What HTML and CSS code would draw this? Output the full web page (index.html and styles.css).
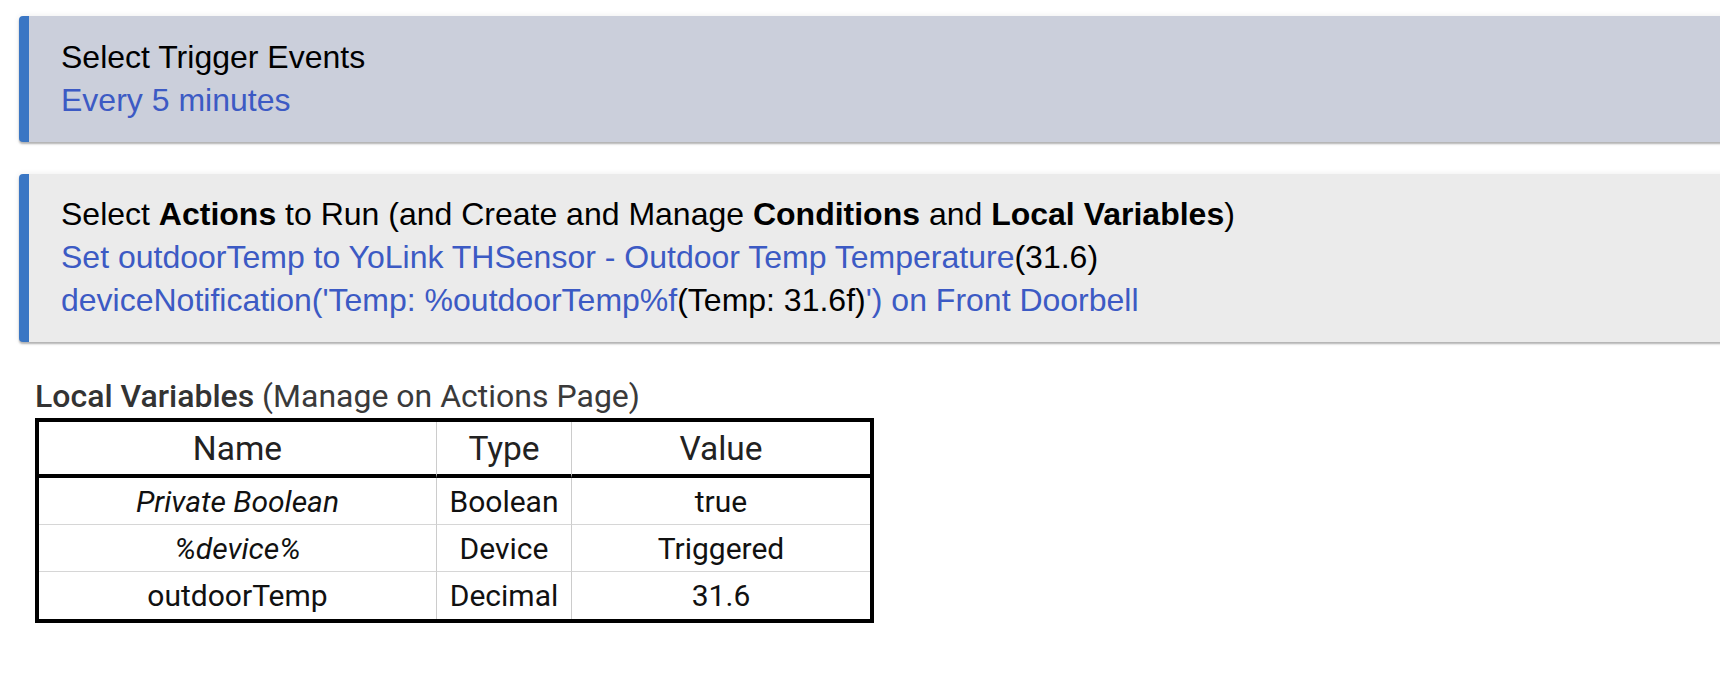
FILE: index.html
```html
<!DOCTYPE html>
<html>
<head>
<meta charset="utf-8">
<link rel="stylesheet" href="styles.css">
</head>
<body>
<div class="page">
  <div class="card card-trigger">
    <div class="line">Select Trigger Events</div>
    <div class="line link">Every 5 minutes</div>
  </div>
  <div class="card card-actions">
    <div class="line">Select <b>Actions</b> to Run (and Create and Manage <b>Conditions</b> and <b>Local Variables</b>)</div>
    <div class="line"><span class="link">Set outdoorTemp to YoLink THSensor - Outdoor Temp Temperature</span>(31.6)</div>
    <div class="line"><span class="link">deviceNotification('Temp: %outdoorTemp%f</span>(Temp: 31.6f)<span class="link">') on Front Doorbell</span></div>
  </div>
  <div class="locals">
    <div class="locals-title"><span class="strong">Local Variables</span> (Manage on Actions Page)</div>
    <table class="vars">
      <colgroup>
        <col class="c-name">
        <col class="c-type">
        <col class="c-value">
      </colgroup>
      <thead>
        <tr><th>Name</th><th>Type</th><th>Value</th></tr>
      </thead>
      <tbody>
        <tr><td class="it">Private Boolean</td><td>Boolean</td><td>true</td></tr>
        <tr><td class="it">%device%</td><td>Device</td><td>Triggered</td></tr>
        <tr><td>outdoorTemp</td><td>Decimal</td><td>31.6</td></tr>
      </tbody>
    </table>
  </div>
</div>
</body>
</html>
```
FILE: styles.css
```css
html, body {
  margin: 0;
  padding: 0;
  background: #ffffff;
}
.page {
  overflow: hidden;
  padding: 16px 0 40px 19px;
}
.card {
  margin-right: -12px;
  border-left: 10px solid #3a76c4;
  border-radius: 4px;
  padding: 20px 20px 20px 32px;
  font-family: "Liberation Sans", Arial, sans-serif;
  font-size: 32px;
  line-height: 43px;
  color: #000;
  box-shadow: 0 2px 2px rgba(0,0,0,0.28), 0 0 6px rgba(0,0,0,0.08);
}
.card-trigger {
  background: #cbcfdb;
}
.card-actions {
  background: #ebebeb;
  margin-top: 32px;
  padding-top: 19px;
}
.line {
  white-space: nowrap;
}
.link {
  color: #3c5ac4;
}
.locals {
  margin-top: 35px;
  margin-left: 16px;
  font-family: Roboto, "Liberation Sans", sans-serif;
}
.locals-title {
  font-size: 32px;
  color: #3a3a3a;
}
.locals-title .strong {
  font-weight: 500;
  color: #333;
}
.vars {
  margin-top: 3px;
  border: 4px solid #000;
  border-collapse: separate;
  border-spacing: 0;
  table-layout: fixed;
  width: 839px;
}
.c-name { width: 398px; }
.c-type { width: 135px; }
.c-value { width: 298px; }
.vars th, .vars td {
  box-sizing: border-box;
  text-align: center;
  padding: 0;
  border-right: 1px solid #cccccc;
}
.vars th:last-child, .vars td:last-child {
  border-right: none;
}
.vars th {
  height: 56px;
  font-size: 33.5px;
  font-weight: 400;
  color: #222;
  border-bottom: 4px solid #000;
}
.vars td {
  height: 47px;
  font-size: 30px;
  color: #111;
  border-bottom: 1px solid #d6d6d6;
}
.vars tr:last-child td {
  border-bottom: none;
}
.vars .it {
  font-style: italic;
}
```
